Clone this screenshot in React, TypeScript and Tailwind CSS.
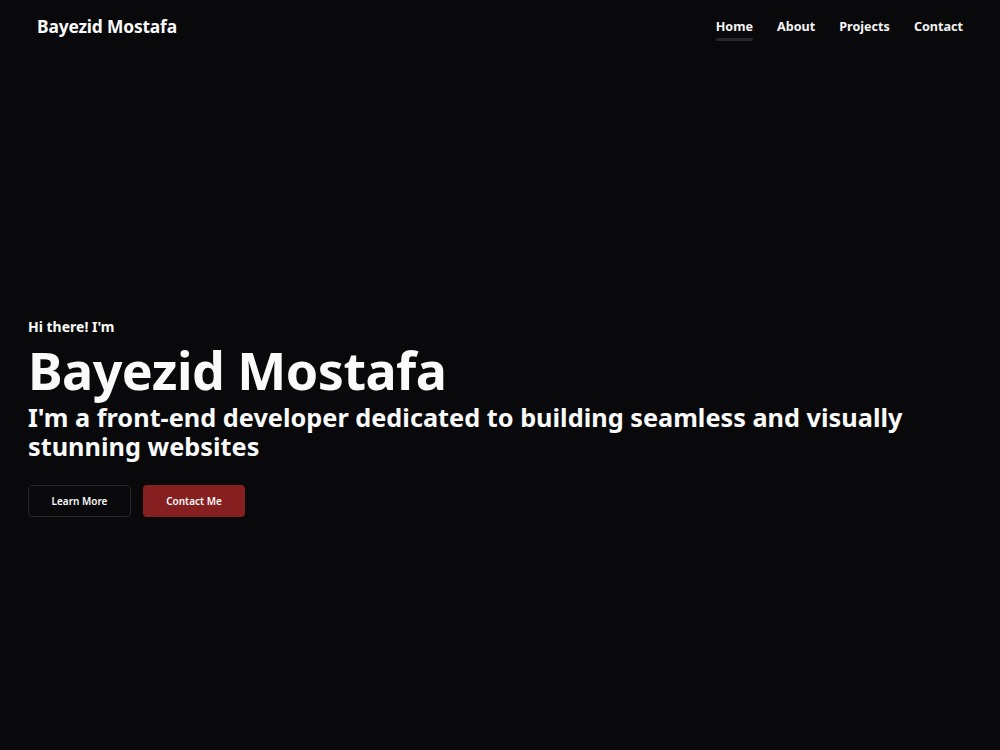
const navLinks = ["Home", "About", "Projects", "Contact"];

function Header() {
  return (
    <header className="flex h-[52px] items-center justify-between px-[37px]">
      <a href="#" className="text-[17.4px] font-bold tracking-[-0.01em] text-zinc-50">
        Bayezid Mostafa
      </a>
      <nav className="flex items-center gap-[24px] pt-[2px]">
        {navLinks.map((link, i) => (
          <a
            key={link}
            href="#"
            className="relative text-[12.6px] font-bold text-zinc-100"
          >
            {link}
            {i === 0 && (
              <span className="absolute left-0 right-0 -bottom-[5px] h-[3px] rounded-full bg-zinc-800" />
            )}
          </a>
        ))}
      </nav>
    </header>
  );
}

function Hero() {
  return (
    <section className="px-[28px] pt-[266px]">
      <p className="text-[14px] font-bold leading-[18px] text-zinc-50">Hi there! I&apos;m</p>
      <h1 className="mt-[6px] text-[52px] font-bold leading-[56px] tracking-[-0.01em] text-zinc-50">
        Bayezid Mostafa
      </h1>
      <h2 className="mt-[5px] max-w-[900px] text-[25.3px] font-bold leading-[29px] text-zinc-50">
        I&apos;m a front-end developer dedicated to building seamless and visually stunning websites
      </h2>
      <div className="mt-[24px] flex gap-[12px]">
        <button className="h-[32px] w-[103px] rounded-[4px] border border-zinc-800 bg-zinc-950 text-[10px] font-semibold text-zinc-50">
          Learn More
        </button>
        <button className="h-[32px] w-[102px] rounded-[4px] bg-[#861f1f] text-[10px] font-semibold text-zinc-50">
          Contact Me
        </button>
      </div>
    </section>
  );
}

export default function App() {
  return (
    <div className="min-h-screen bg-[#09090b] font-['Noto_Sans',sans-serif]">
      <Header />
      <Hero />
    </div>
  );
}
